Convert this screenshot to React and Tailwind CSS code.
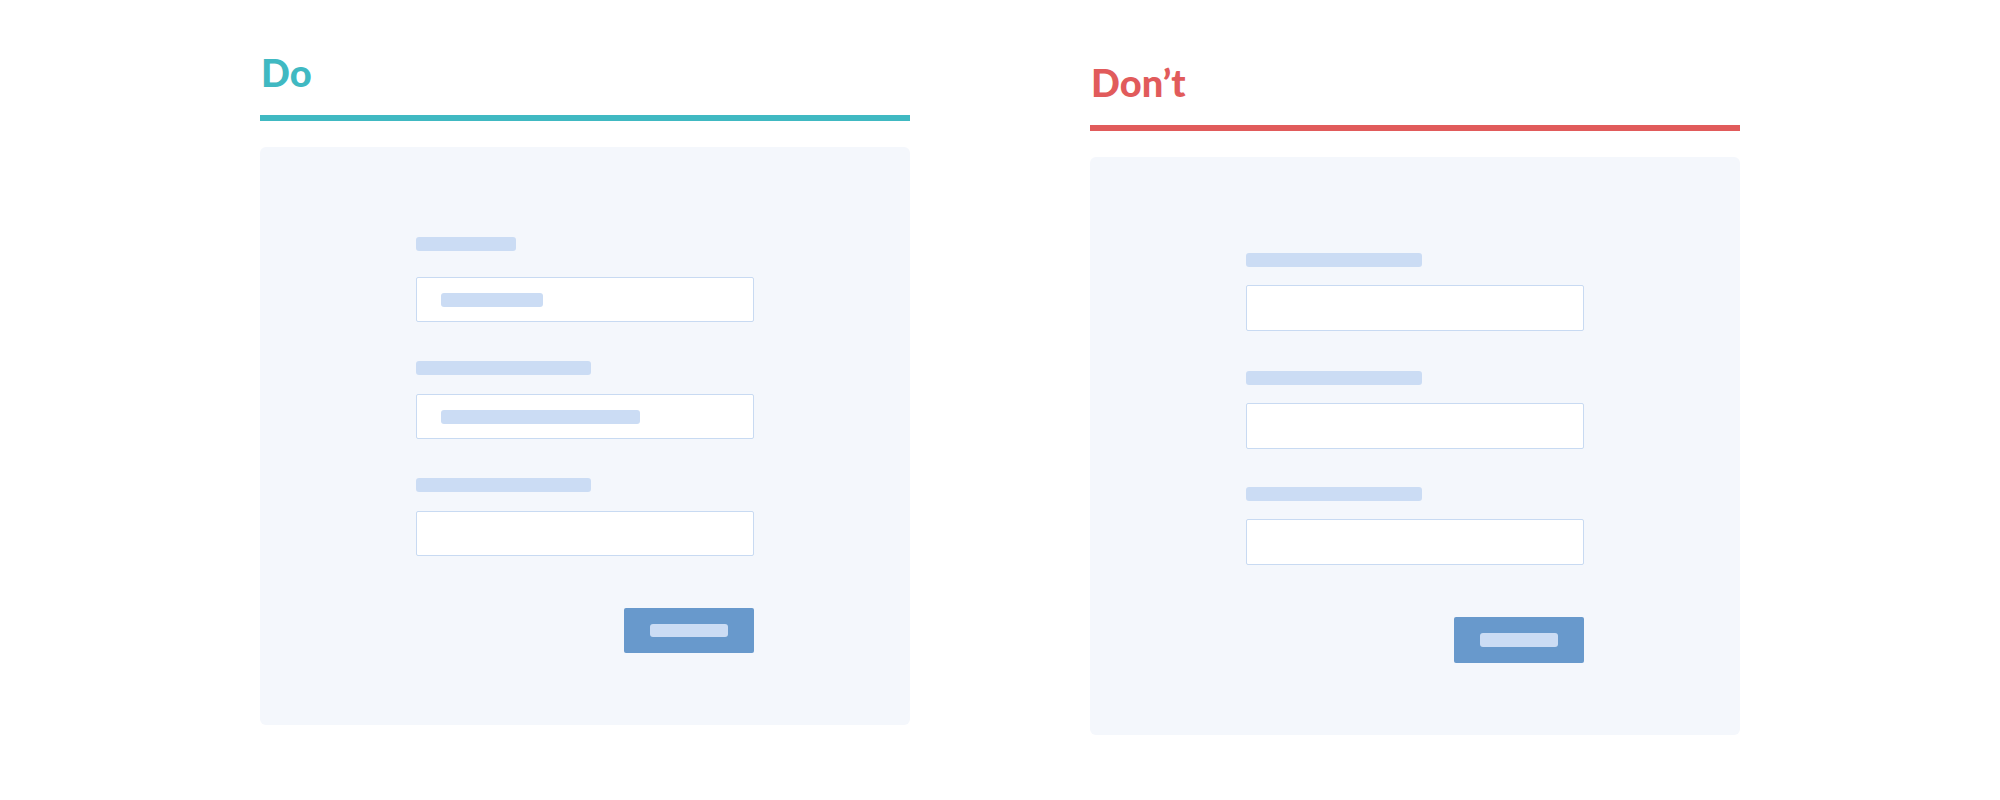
const Pill = ({ w, className = "" }) => (
  <div className={`h-[14px] rounded-[3px] bg-[#cbdcf4] ${className}`} style={{ width: w }} />
);

function Field({ labelW, valueW, labelGap, inputH }) {
  return (
    <div className="flex flex-col">
      <Pill w={labelW} />
      <div
        className={`flex items-center rounded-[2px] border border-[#c8daf2] bg-white pl-[24px] ${labelGap} ${inputH}`}
      >
        {valueW ? <Pill w={valueW} className="h-[13px]" /> : null}
      </div>
    </div>
  );
}

function Panel({ title, accent, children, offset }) {
  return (
    <div className={`flex w-[650px] flex-col ${offset}`}>
      <h2
        className={`h-[38px] pl-[1px] text-[38px] font-black leading-none ${accent.text}`}
        style={{ fontFamily: "Lato, 'Open Sans', sans-serif" }}
      >
        {title}
      </h2>
      <div className={`mt-[24px] h-[6px] w-full ${accent.bar}`} />
      <div className="mt-[26px] flex h-[578px] flex-col rounded-[6px] bg-[#f4f7fc] pl-[156px]">
        {children}
      </div>
    </div>
  );
}

export default function App() {
  return (
    <div className="flex min-h-[800px] w-[2000px] justify-center gap-[180px] bg-white pt-[53px]">
      <Panel title="Do" accent={{ text: "text-[#40b9c2]", bar: "bg-[#40b9c2]" }} offset="">
        <div className="flex w-[338px] flex-col pt-[90px]">
          <Field labelW={100} valueW={102} labelGap="mt-[26px]" inputH="h-[45px]" />
          <div className="mt-[39px]">
            <Field labelW={175} valueW={199} labelGap="mt-[19px]" inputH="h-[45px]" />
          </div>
          <div className="mt-[39px]">
            <Field labelW={175} labelGap="mt-[19px]" inputH="h-[45px]" />
          </div>
          <div className="mt-[52px] flex justify-end">
            <button className="flex h-[45px] w-[130px] items-center justify-center rounded-[2px] bg-[#6899cc]">
              <span className="h-[13px] w-[78px] rounded-[3px] bg-[#cbdcf4]" />
            </button>
          </div>
        </div>
      </Panel>

      <Panel title="Don’t" accent={{ text: "text-[#e15b5b]", bar: "bg-[#e15b5b]" }} offset="mt-[10px]">
        <div className="flex w-[338px] flex-col pt-[96px]">
          <Field labelW={176} labelGap="mt-[18px]" inputH="h-[46px]" />
          <div className="mt-[40px]">
            <Field labelW={176} labelGap="mt-[18px]" inputH="h-[46px]" />
          </div>
          <div className="mt-[38px]">
            <Field labelW={176} labelGap="mt-[18px]" inputH="h-[46px]" />
          </div>
          <div className="mt-[52px] flex justify-end">
            <button className="flex h-[46px] w-[130px] items-center justify-center rounded-[2px] bg-[#6899cc]">
              <span className="h-[14px] w-[78px] rounded-[3px] bg-[#cbdcf4]" />
            </button>
          </div>
        </div>
      </Panel>
    </div>
  );
}
